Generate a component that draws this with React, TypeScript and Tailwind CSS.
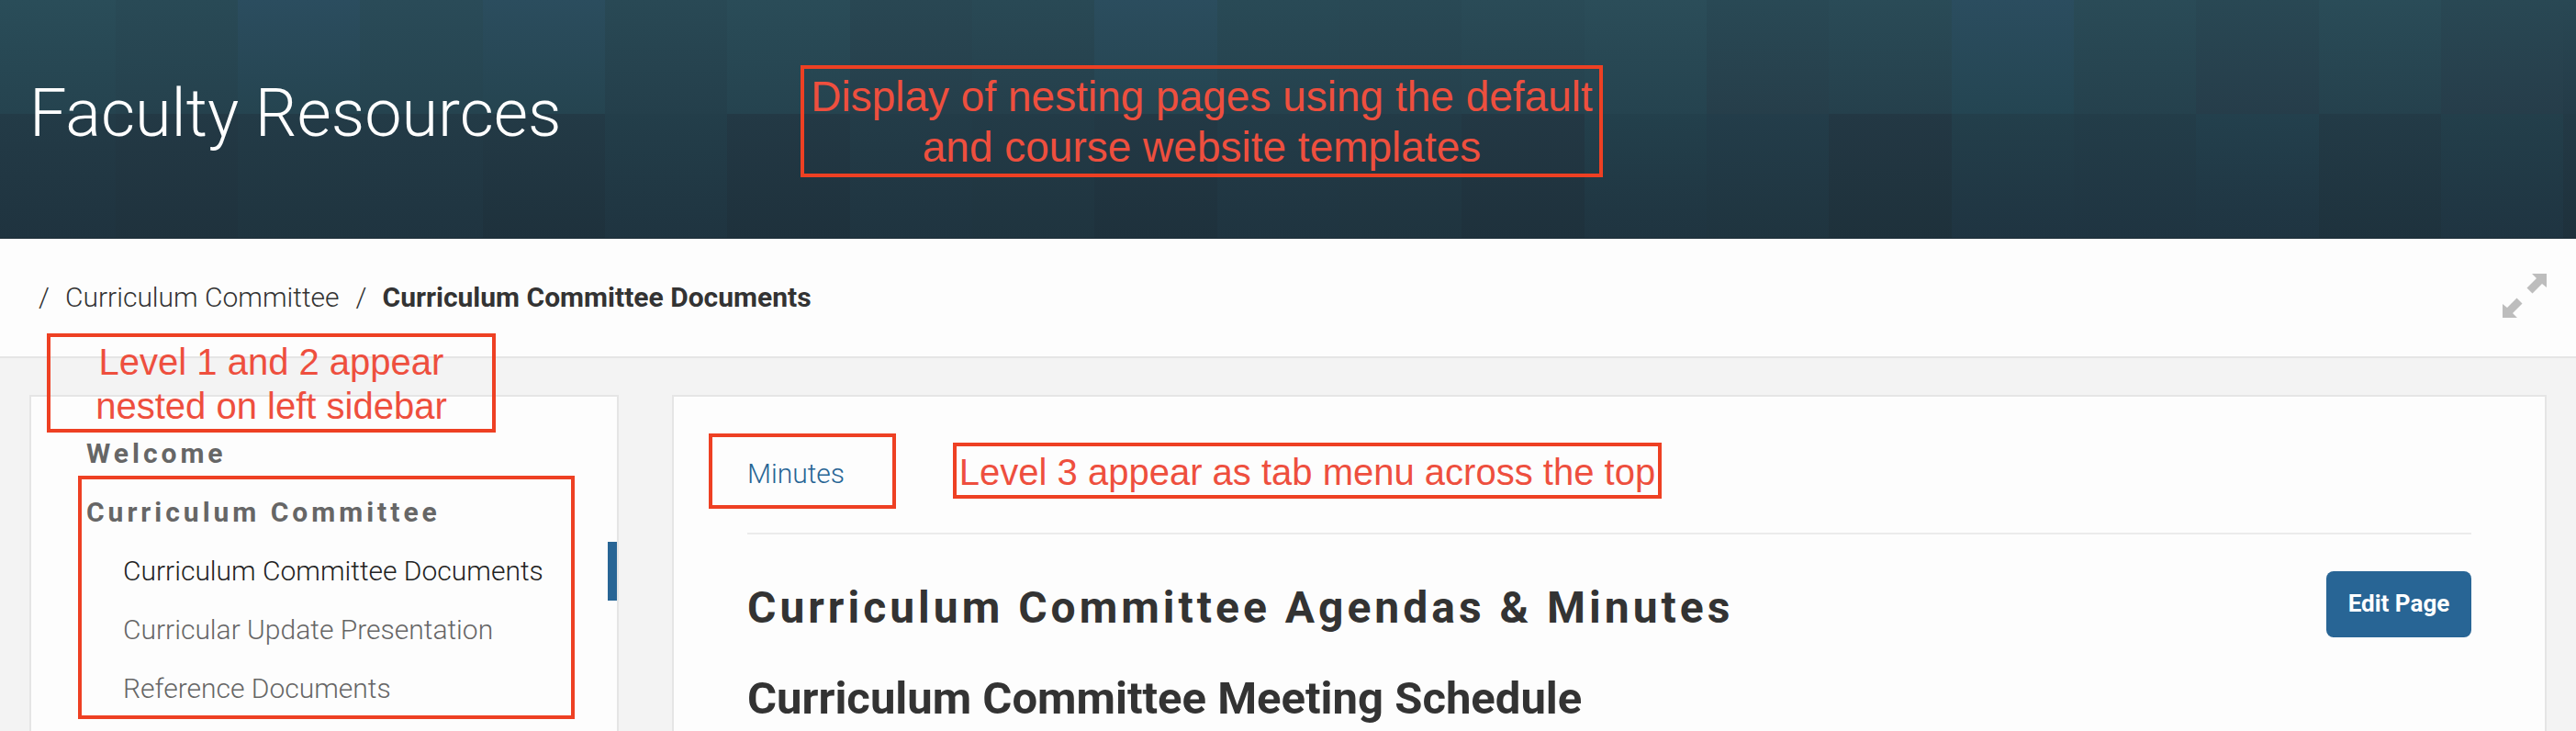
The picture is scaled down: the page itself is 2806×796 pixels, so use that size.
const roboto = 'font-[Roboto,sans-serif]';
const tops = ['#2a4d59', '#294a56', '#2b4d5f', '#2a4b58', '#2b4d5e', '#294955', '#2a4c58', '#294753', '#294955', '#2b4d5e', '#294a56', '#294955', '#2a4b57', '#2b4d59', '#294955', '#2a4b57', '#2b4d5f', '#2a4b57', '#294854', '#2a4c58', '#294854', '#294854'];
const topEnds = ['#25434f', '#25414d', '#254450', '#25434f', '#254450', '#243f4b', '#25434f', '#253e4a', '#253f4b', '#254450', '#25414d', '#25404c', '#25414d', '#25434f', '#263e4a', '#25404c', '#244552', '#25414d', '#263d4a', '#25414d', '#263d4a', '#243b48'];
const lows = ['#233b47', '#233945', '#233b47', '#233b47', '#233a46', '#233e4a', '#233945', '#233c48', '#233b47', '#233945', '#233c48', '#233b47', '#233844', '#23404c', '#233d4a', '#233844', '#233f4b', '#233d49', '#23404d', '#233b47', '#233f4b', '#233a46'];
const lowEnds = ['#1f333f', '#1f323d', '#1f343f', '#1f3440', '#1e313c', '#1f3440', '#1e313c', '#1f3440', '#1f343f', '#1e313c', '#1f3440', '#1f343f', '#1e313c', '#1f3440', '#1f343f', '#1e313b', '#1f3441', '#1f3441', '#1f3441', '#1e323d', '#1f3441', '#1e313c'];

function Tiles() {
  return (
    <div className="absolute inset-0 overflow-hidden">
      <div className="-ml-[7.5px] grid w-[2933px] grid-cols-22 grid-rows-[124px_136px]">
        {tops.map((c, i) => (
          <div key={`t${i}`} style={{ background: `linear-gradient(${c}, ${topEnds[i]})` }} />
        ))}
        {lows.map((c, i) => (
          <div key={`l${i}`} style={{ background: `linear-gradient(${c}, ${lowEnds[i]})` }} />
        ))}
      </div>
    </div>
  );
}

function Note({ className, children }: { className: string; children?: React.ReactNode }) {
  return (
    <div className={`absolute border-4 border-[#ee4023] text-center font-['Liberation_Sans',sans-serif] whitespace-nowrap text-[#ee4f3e] ${className}`}>
      {children}
    </div>
  );
}

export default function App() {
  return (
    <div className={`relative flex h-[796px] w-[2806px] flex-col overflow-hidden bg-[#f3f3f3] ${roboto} text-[30px] leading-[39px] whitespace-nowrap text-[#333]`}>
      <header className="relative h-[260px] shrink-0 border-b border-[#1c2d37]">
        <Tiles />
        <h1 className="relative pt-[82px] pl-[32px] text-[72px] leading-[83px] font-light text-white">Faculty Resources</h1>
      </header>

      <nav className="flex h-[130px] shrink-0 items-start justify-between border-b-2 border-[#e5e5e5] bg-[#fdfdfd] pr-[32px] pl-[42px]">
        <div className="flex pt-[44px] font-light">
          <span className="w-[29px]">/</span>
          <a>Curriculum Committee</a>
          <span className="ml-[18px] w-[29px]">/</span>
          <span className="font-bold">Curriculum Committee Documents</span>
        </div>
        <svg className="mt-[38px] h-[48px] w-[48px]" viewBox="0 0 48 48" fill="#bdbdbd">
          <path d="M32 0H48V15L43 11L32.500 21.500L26.500 15.500L37 5Z" />
          <path d="M16 48H0V33L5 37L15.500 26.500L21.500 32.500L11 43Z" />
        </svg>
      </nav>

      <div className="flex grow items-stretch gap-[58px] px-[32px] pt-[40px]">
        <aside className="w-[642px] shrink-0 border-2 border-b-0 border-[#e5e5e5] bg-[#fdfdfd] pt-[30px] leading-[63px] font-light text-[#666]">
          <div className="pb-px pl-[60px] font-bold tracking-[3.98px]">Welcome</div>
          <div className="pb-px pl-[60px] font-bold tracking-[3.98px]">Curriculum Committee</div>
          <div className="border-r-[10px] border-[#286595] pb-px pl-[100px] text-[#222]">Curriculum Committee Documents</div>
          <div className="pb-px pl-[100px]">Curricular Update Presentation</div>
          <div className="pb-px pl-[100px]">Reference Documents</div>
        </aside>

        <main className="flex grow flex-col border-2 border-b-0 border-[#e5e5e5] bg-[#fdfdfd] px-[80px]">
          <div className="h-[150px] shrink-0 border-b-2 border-[#ebebeb] pt-[64px] font-light text-[#286595]">Minutes</div>
          <div className="flex items-start justify-between pt-[40px]">
            <h2 className="pt-[11px] text-[48px] leading-[57px] font-bold tracking-[4px]">Curriculum Committee Agendas &amp; Minutes</h2>
            <button className="h-[72px] w-[158px] rounded-[8px] bg-[#286595] pb-[2px] text-[26px] font-bold text-white">Edit Page</button>
          </div>
          <h3 className="mt-[38px] text-[49px] leading-[58px] font-bold">Curriculum Committee Meeting Schedule</h3>
        </main>
      </div>

      <Note className="top-[71px] left-[872px] h-[122px] w-[874px] pt-[2.5px] text-[46px] leading-[55px]">
        Display of nesting pages using the default<br />and course website templates
      </Note>
      <Note className="top-[363px] left-[51px] h-[108px] w-[489px] pt-[3px] text-[40px] leading-[48px]">
        Level 1 and 2 appear<br />nested on left sidebar
      </Note>
      <Note className="top-[518px] left-[85px] h-[265px] w-[541px]" />
      <Note className="top-[472px] left-[772px] h-[82px] w-[204px]" />
      <Note className="top-[482px] left-[1038px] h-[61px] w-[772px] pt-[4px] text-[40px] leading-[48px]">
        Level 3 appear as tab menu across the top
      </Note>
    </div>
  );
}
